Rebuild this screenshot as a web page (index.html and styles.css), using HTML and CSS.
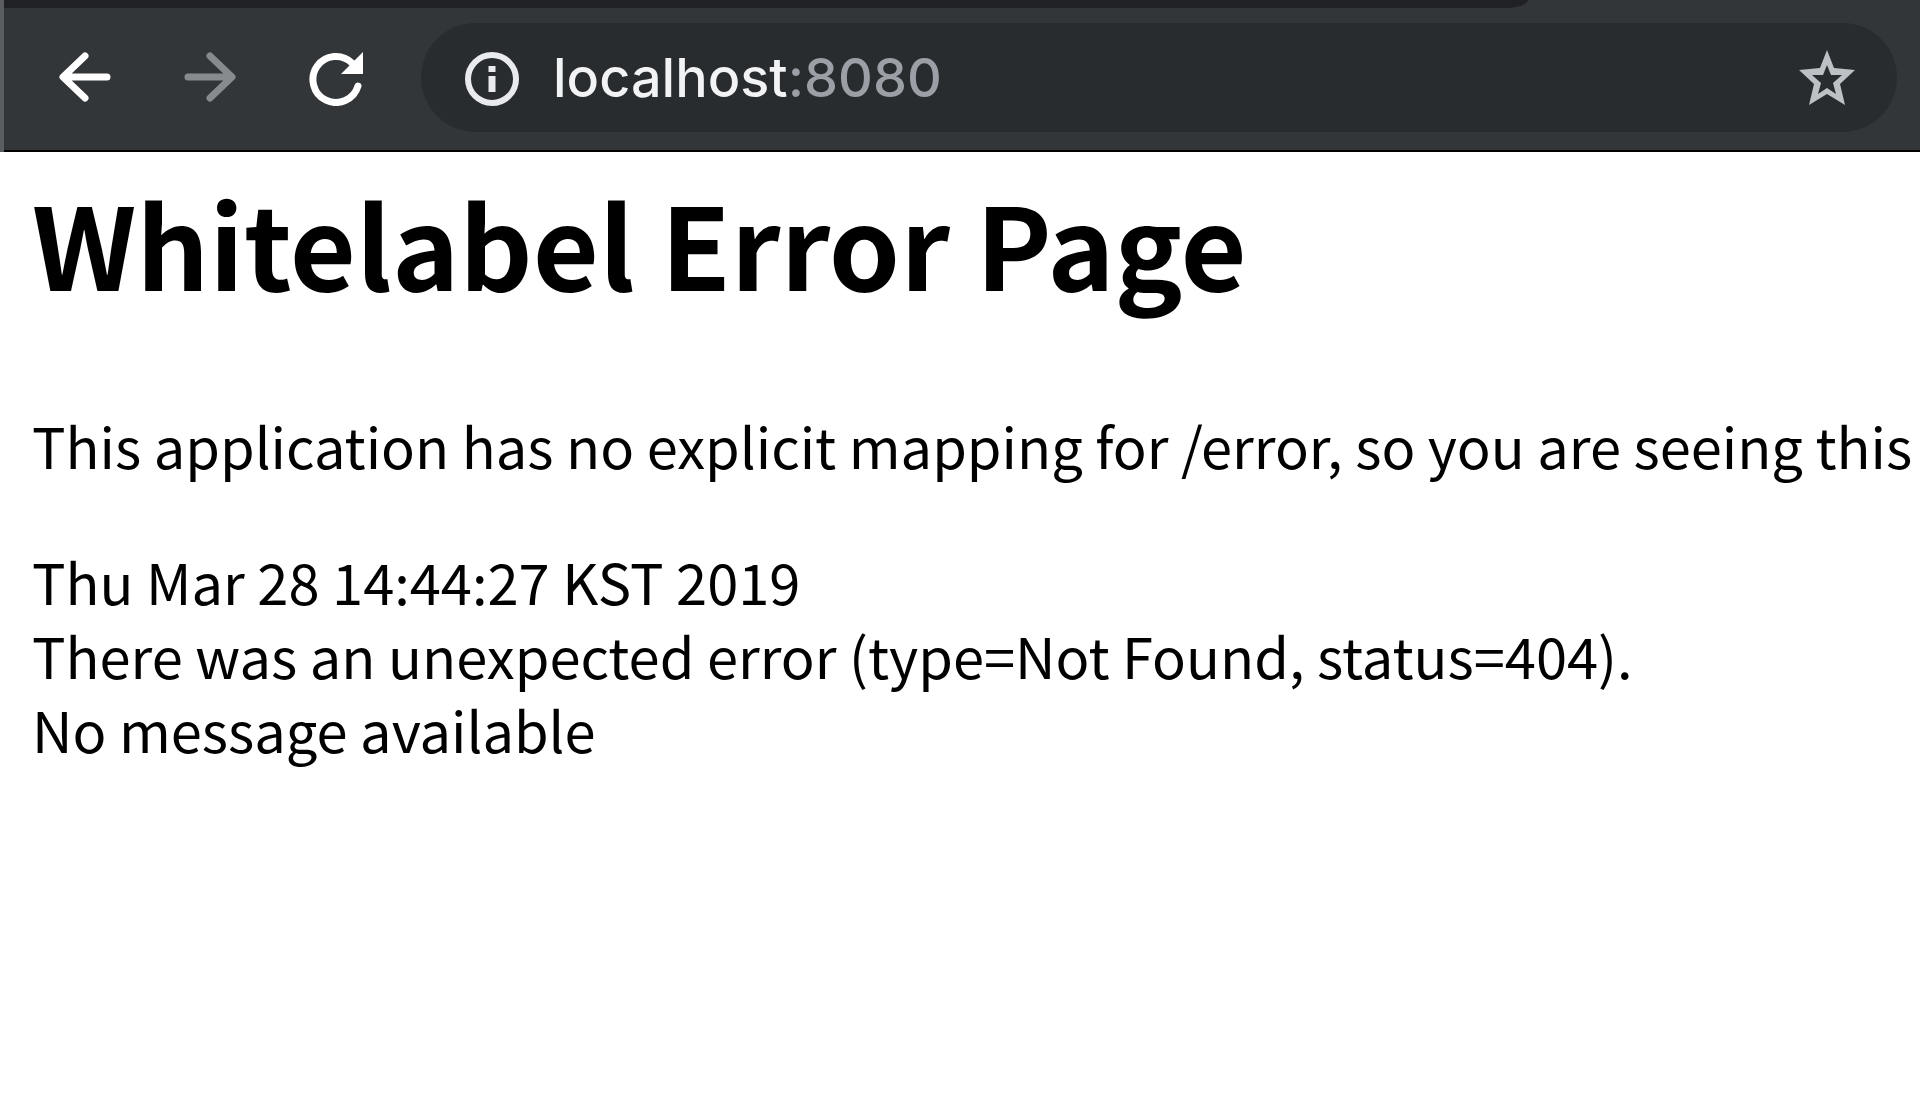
FILE: index.html
```html
<!DOCTYPE html>
<html lang="en">
<head>
<meta charset="utf-8">
<title>localhost:8080</title>
<link rel="stylesheet" href="styles.css">
</head>
<body>
<header class="browser">
  <div class="tabstrip"><div class="tabstrip-gap"></div></div>
  <nav class="toolbar" aria-label="Browser">
    <div class="nav-buttons">
      <button class="icon-button" type="button" aria-label="Back">
        <svg class="icon" viewBox="0 0 56 56"><path d="M28 6 6 27 28 48M7 27H50" fill="none" stroke="currentColor" stroke-width="7" stroke-linecap="round" stroke-linejoin="round"/></svg>
      </button>
      <button class="icon-button" type="button" aria-label="Forward" disabled>
        <svg class="icon" viewBox="0 0 56 56"><path d="M28 6 50 27 28 48M49 27H6" fill="none" stroke="currentColor" stroke-width="7" stroke-linecap="round" stroke-linejoin="round"/></svg>
      </button>
      <button class="icon-button" type="button" aria-label="Reload">
        <svg class="icon" viewBox="0 0 56 56"><path d="M51 36A23 23 0 1 1 45 13" fill="none" stroke="currentColor" stroke-width="7" stroke-linecap="round"/><path d="M56 2V24H34Z" fill="currentColor"/></svg>
      </button>
    </div>
    <form class="omnibox">
      <button class="icon-button info" type="button" aria-label="Site information">
        <svg class="icon" viewBox="0 0 56 56"><circle cx="29" cy="29" r="24" fill="none" stroke="currentColor" stroke-width="6"/><path d="M25.5 16h7v6h-7zM25.5 26h7v16h-7z" fill="currentColor"/></svg>
      </button>
      <input class="address" type="text" aria-label="Address" value="localhost:8080">
      <button class="icon-button star" type="button" aria-label="Bookmark this page">
        <svg class="icon" viewBox="0 0 56 56"><path fill-rule="evenodd" fill="currentColor" d="M28 0 35 18 56 20 41 34 46 55 28 44 10 55 15 34 0 20 21 18ZM28 15 24 25 13 25 22 33 19 44 28 38 37 44 34 33 43 25 32 25Z"/></svg>
      </button>
    </form>
  </nav>
</header>
<main class="page">
  <h1 class="title">Whitelabel Error Page</h1>
  <p class="text lead">This application has no explicit mapping for /error, so you are seeing this</p>
  <div class="text">Thu Mar 28 14:44:27 KST 2019</div>
  <div class="text">There was an unexpected error (type=Not Found, status=404).</div>
  <div class="text">No message available</div>
</main>
</body>
</html>
```
FILE: styles.css
```css
* { box-sizing: border-box; }
body {
  margin: 0;
  background: #fff;
  color: #000;
  font-family: "Noto Sans CJK KR", "Noto Sans", sans-serif;
  overflow-x: hidden;
}
.browser {
  background: #323639;
  border-left: 4px solid #5b5e60;
}
.tabstrip-gap {
  width: 1524px;
  max-width: 80%;
  height: 8px;
  background: #202124;
  border-bottom-right-radius: 24px 8px;
}
.toolbar {
  display: flex;
  align-items: center;
  gap: 58px;
  padding: 15px 23px 18px 53px;
  border-bottom: 2px solid #000;
}
.nav-buttons { display: flex; gap: 69px; }
.icon-button {
  flex: none;
  width: 56px;
  height: 56px;
  padding: 0;
  border: 0;
  background: none;
  color: #fff;
}
.icon-button:disabled { color: #888b8d; }
.icon { display: block; width: 100%; height: 100%; }
.omnibox {
  flex: 1;
  display: flex;
  align-items: center;
  height: 109px;
  padding: 0 42px;
  border-radius: 55px;
  background: #292c2f;
}
.info { color: #e8eaed; }
.star { color: #bdc1c6; }
.address {
  flex: 1;
  min-width: 0;
  margin-left: 34px;
  padding: 0;
  border: 0;
  outline: 0;
  font: 500 54px/68px Inter, sans-serif;
  color: #f1f3f4;
  /* host is bright, port is dimmed */
  background: linear-gradient(90deg, #f1f3f4 235px, #9aa0a6 235px);
  -webkit-background-clip: text;
  background-clip: text;
  -webkit-text-fill-color: transparent;
}
.page { padding: 18px 32px; white-space: nowrap; }
.title { margin: 0 0 94px; font-size: 114px; line-height: 144px; font-weight: 700; }
.text { margin: 0; font-size: 56px; line-height: 74px; }
.lead { margin-bottom: 62px; }
```
